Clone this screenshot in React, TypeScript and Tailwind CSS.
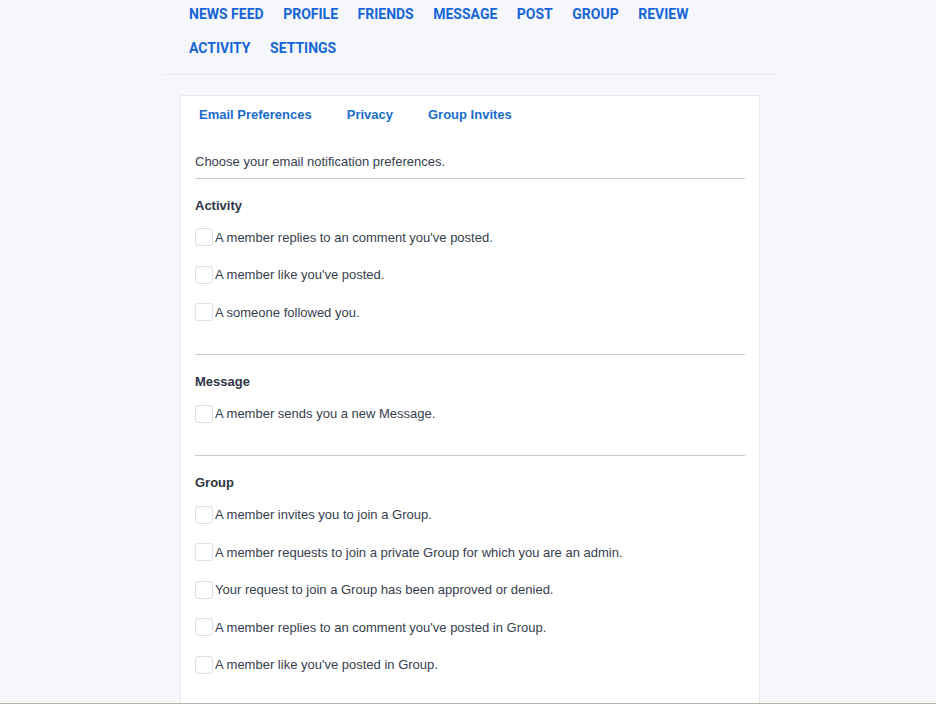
const navItems = ['NEWS FEED', 'PROFILE', 'FRIENDS', 'MESSAGE', 'POST', 'GROUP', 'REVIEW', 'ACTIVITY', 'SETTINGS']

const tabs = ['Email Preferences', 'Privacy', 'Group Invites']

const sections = [
  {
    title: 'Activity',
    items: [
      "A member replies to an comment you've posted.",
      "A member like you've posted.",
      'A someone followed you.',
    ],
  },
  {
    title: 'Message',
    items: ['A member sends you a new Message.'],
  },
  {
    title: 'Group',
    items: [
      'A member invites you to join a Group.',
      'A member requests to join a private Group for which you are an admin.',
      'Your request to join a Group has been approved or denied.',
      "A member replies to an comment you've posted in Group.",
      "A member like you've posted in Group.",
    ],
  },
]

function CheckRow({ label }: { label: string }) {
  return (
    <label className="flex h-[37.6px] items-center gap-[2px] text-[13px] text-[#363e4e]">
      <input type="checkbox" className="peer sr-only" />
      <span className="h-[18px] w-[18px] shrink-0 rounded-[3px] border border-[#dcdfe3] bg-white peer-checked:bg-[#1a6dcc]" />
      <span>{label}</span>
    </label>
  )
}

export default function App() {
  return (
    <div
      className="h-[704px] overflow-hidden border-b border-[#b5b5a5] bg-[#f5f7fa]"
      style={{ fontFamily: '"Liberation Sans", Arial, sans-serif' }}
    >
      <div className="mx-auto w-[616px] pl-[4px]">
        {/* top nav */}
        <nav className="border-b border-[#e5e8ec] px-[25px] pb-[12px]">
          <ul
            className="flex flex-wrap gap-y-[6px] text-[14px] font-bold text-[#1565d8]"
            style={{ fontFamily: 'Roboto, "Liberation Sans", sans-serif' }}
          >
            {navItems.map((item) => (
              <li key={item} className="mr-[19.5px] h-[28px] leading-[28px]">
                <a href="#">{item}</a>
              </li>
            ))}
          </ul>
        </nav>

        {/* settings card */}
        <div className="mx-[16px] mt-[20px] border border-[#e6e9ee] bg-white">
          <div className="flex h-[38px] items-center gap-[35px] px-[18px] text-[13px] font-bold text-[#1a6dcc]">
            {tabs.map((t) => (
              <a key={t} href="#">
                {t}
              </a>
            ))}
          </div>

          <div className="px-[14px]">
            <p className="mt-[18px] border-b border-[#c8c8c8] pb-[6px] text-[13px] leading-[20px] text-[#363e4e]">
              Choose your email notification preferences.
            </p>

            {sections.map((s) => (
              <div key={s.title} className="border-b border-[#c8c8c8] pb-[23px] pt-[16.5px]">
                <h3 className="text-[13px] font-bold leading-[20px] text-[#2e3646]">{s.title}</h3>
                <div className="mt-[3px]">
                  {s.items.map((item) => (
                    <CheckRow key={item} label={item} />
                  ))}
                </div>
              </div>
            ))}
          </div>
        </div>
      </div>
    </div>
  )
}
